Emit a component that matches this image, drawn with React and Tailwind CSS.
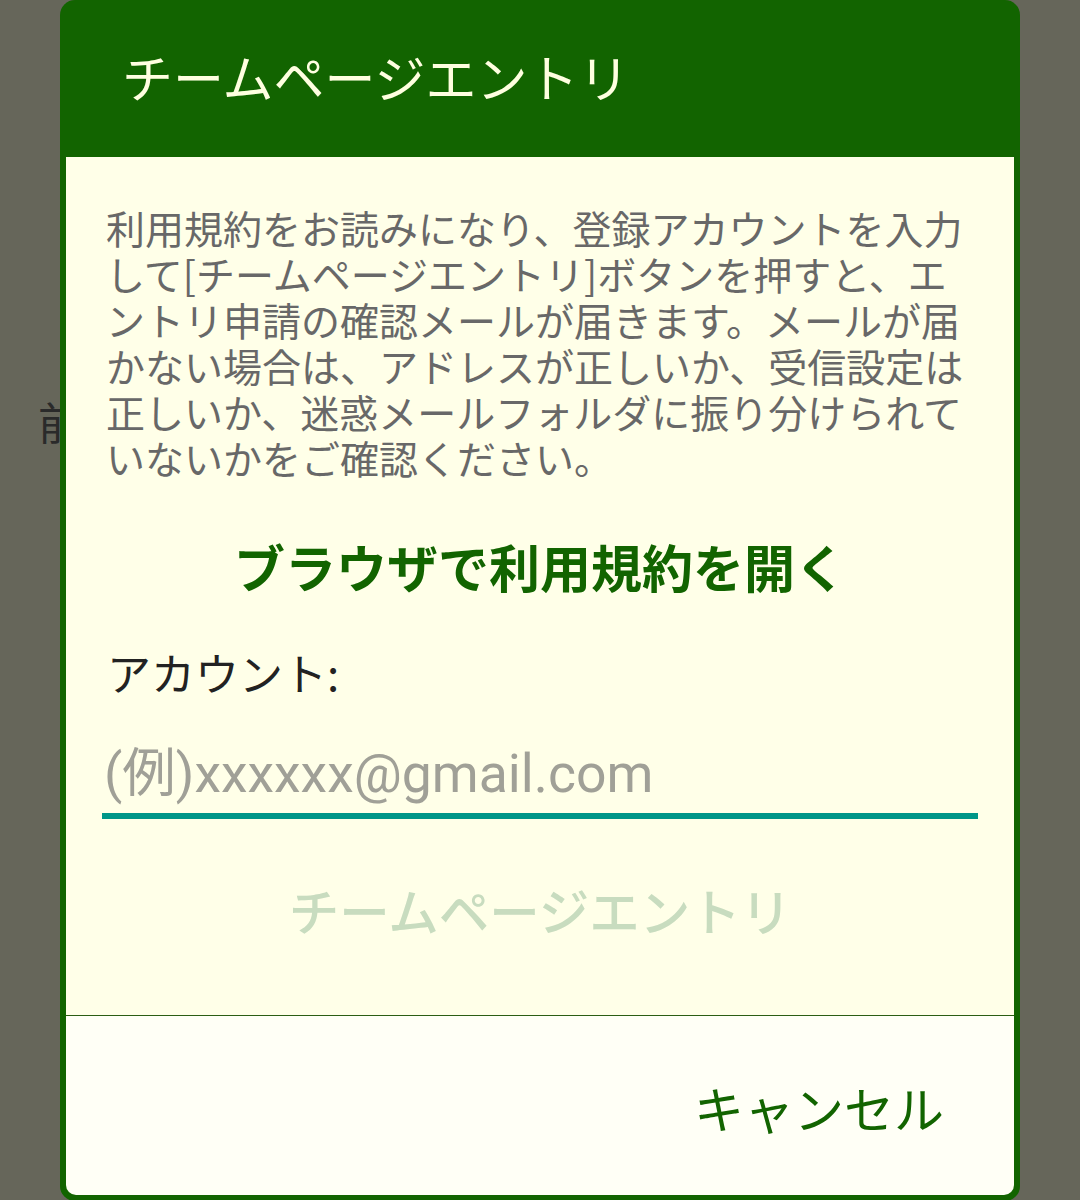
export default function App() {
  const jp = { fontFamily: '"Noto Sans CJK JP", "Noto Sans", sans-serif' };
  const lines = [
    "利用規約をお読みになり、登録アカウントを入力",
    "して[チームページエントリ]ボタンを押すと、エ",
    "ントリ申請の確認メールが届きます。メールが届",
    "かない場合は、アドレスが正しいか、受信設定は",
    "正しいか、迷惑メールフォルダに振り分けられて",
    "いないかをご確認ください。",
  ];
  return (
    <div className="relative w-full h-[1200px] overflow-hidden bg-[#66665a]" style={jp}>
      <div className="absolute left-[38px] top-[391px] text-[44px] leading-[60px] text-[#2a2a2a]">前</div>
      <div className="relative ml-[60px] w-[960px] h-[1201px] bg-[#126400] rounded-[15px] flex flex-col px-[6px] pb-[6px]">
        <div className="h-[157px] flex items-center pl-[56px] pb-[5px] shrink-0">
          <span className="text-[51px] leading-[60px] text-[#ffffe0]">チームページエントリ</span>
        </div>
        <div className="h-[858px] shrink-0 bg-[#ffffe8] flex flex-col">
          <div className="pt-[47px] pl-[40px] text-[39px] leading-[46px] text-[#686868] whitespace-nowrap">
            {lines.map((l, i) => (
              <div key={i}>{l}</div>
            ))}
          </div>
          <div className="mt-[56px] text-center text-[51px] leading-[60px] font-bold text-[#126400]">
            ブラウザで利用規約を開く
          </div>
          <div className="mt-[51px] pl-[41px] text-[44px] leading-[50px] text-[#222222]">アカウント:</div>
          <div className="mt-[45px] ml-[36px] w-[876px] border-b-[6px] border-[#009688] pb-[7px] pl-[2px]">
            <div
              className="text-[53.5px] leading-[64px] text-[#a0a097]"
              style={{ fontFamily: 'Roboto, "Noto Sans CJK JP", sans-serif' }}
            >
              (例)xxxxxx@gmail.com
            </div>
          </div>
          <div className="mt-[60px] text-center text-[50.5px] leading-[60px] font-medium text-[#c8dcbf]">
            チームページエントリ
          </div>
        </div>
        <div className="h-px bg-[#2b5d14] shrink-0"></div>
        <div className="flex-1 bg-[#fffff6] rounded-b-[10px] flex justify-end pt-[61px] pr-[70px]">
          <span className="text-[50px] leading-[60px] text-[#126400]">キャンセル</span>
        </div>
      </div>
    </div>
  );
}
